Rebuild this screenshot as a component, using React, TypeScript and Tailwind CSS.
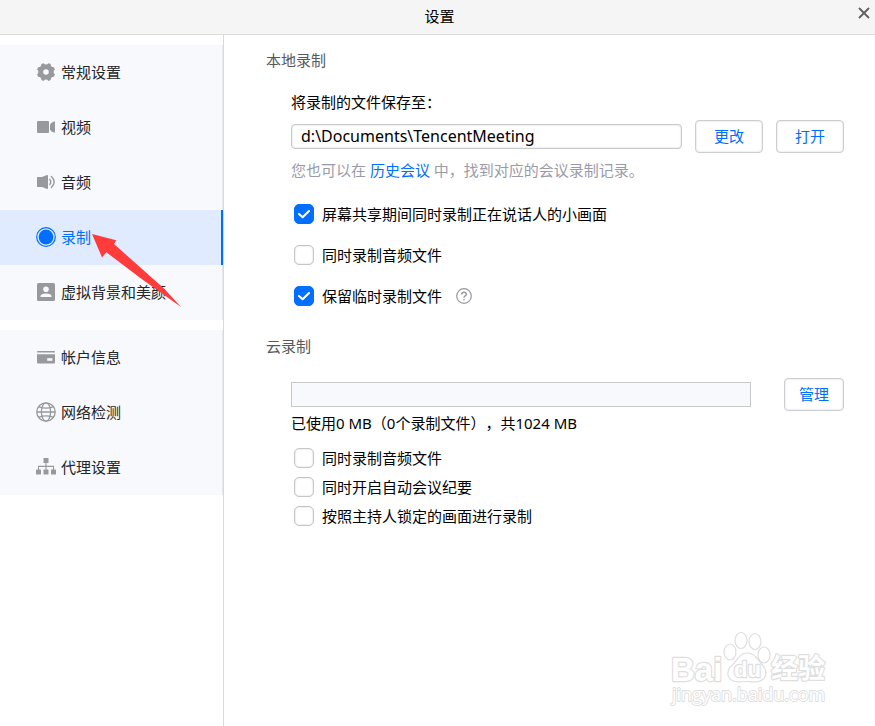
import { useState } from "react";
import type { ReactNode } from "react";

const GearIcon = () => (
  <svg viewBox="0 0 20 20" className="size-5" fill="#97999c" aria-hidden="true">
    <path
      fillRule="evenodd"
      d="M7.6 1.2 Q8.6 2.4 10 2.4 Q11.4 2.4 12.4 1.2 L14.7 2.1 Q14.6 3.7 15.5 4.6 Q16.4 5.4 17.9 5.3 L18.9 7.6 Q17.6 8.6 17.6 10 Q17.6 11.4 18.9 12.4 L17.9 14.7 Q16.3 14.6 15.5 15.5 Q14.6 16.4 14.7 17.9 L12.4 18.9 Q11.4 17.6 10 17.6 Q8.6 17.6 7.6 18.9 L5.3 17.9 Q5.4 16.3 4.5 15.5 Q3.6 14.6 2.1 14.7 L1.1 12.4 Q2.4 11.4 2.4 10 Q2.4 8.6 1.1 7.6 L2.1 5.3 Q3.7 5.4 4.5 4.6 Q5.4 3.6 5.3 2.1 Z M10 7.2 A2.8 2.8 0 1 0 10 12.8 A2.8 2.8 0 1 0 10 7.2 Z"
    />
  </svg>
);

const VideoIcon = () => (
  <svg viewBox="0 0 20 20" className="size-5" fill="#97999c" aria-hidden="true">
    <rect x="1" y="4" width="12" height="12" rx="1" />
    <path d="M14 7.5 Q15 5.2 18 4.4 Q19 4.2 19 5.2 V14.8 Q19 15.8 18 15.6 Q15 14.8 14 12.5 Z" />
  </svg>
);

const AudioIcon = () => (
  <svg viewBox="0 0 20 20" className="size-5" fill="#97999c" aria-hidden="true">
    <path d="M1.6 5 H6 L11 3 Q12 2.8 12 3.8 V16.2 Q12 17.2 11 17 L6 15 H1.6 Q1 15 1 14.4 V5.6 Q1 5 1.6 5 Z" />
    <g fill="none" stroke="#97999c" strokeWidth="1.4" strokeLinecap="round">
      <path d="M13.8 7.4 Q15.8 10 13.8 12.6" />
      <path d="M15.4 4.6 Q21 10 15.4 15.4" />
    </g>
  </svg>
);

const RecordIcon = () => (
  <svg viewBox="0 0 20 20" className="size-5" aria-hidden="true">
    <circle cx="10" cy="10" r="9.3" fill="none" stroke="#006eff" strokeWidth="1.2" />
    <circle cx="10" cy="10" r="7.4" fill="#006eff" />
  </svg>
);

const PortraitIcon = () => (
  <svg viewBox="0 0 20 20" className="size-5" aria-hidden="true">
    <rect x="1" y="1" width="18" height="18" rx="1.5" fill="#97999c" />
    <circle cx="10" cy="7.3" r="2.8" fill="#f7f9fc" />
    <path d="M4.5 15 V14 Q4.8 11.4 10 11.4 Q15.2 11.4 15.5 14 V15 Z" fill="#f7f9fc" />
  </svg>
);

const CardIcon = () => (
  <svg viewBox="0 0 20 20" className="size-5" aria-hidden="true">
    <path d="M1 5.6 V4.6 Q1 4 1.8 4 H18.2 Q19 4 19 4.6 V5.6 Z" fill="#97999c" />
    <path d="M1 7.2 H19 V15.6 Q19 16.4 18.2 16.4 H1.8 Q1 16.4 1 15.6 Z" fill="#97999c" />
    <rect x="11.2" y="11.2" width="5.2" height="2.6" fill="#f7f9fc" />
  </svg>
);

const GlobeIcon = () => (
  <svg viewBox="0 0 20 20" className="size-5" fill="none" stroke="#97999c" strokeWidth="1.3" aria-hidden="true">
    <circle cx="10" cy="10" r="9.2" />
    <ellipse cx="10" cy="10" rx="4.6" ry="9.2" />
    <path d="M0.8 10 H19.2 M2.8 4.8 Q10 7.6 17.2 4.8 M2.8 15.2 Q10 12.4 17.2 15.2" />
  </svg>
);

const TreeIcon = () => (
  <svg viewBox="0 0 20 20" className="size-5" fill="#97999c" aria-hidden="true">
    <rect x="7.5" y="1" width="5" height="5" rx="0.6" />
    <rect x="0" y="12.6" width="5" height="5" rx="0.6" />
    <rect x="7.5" y="12.6" width="5" height="5" rx="0.6" />
    <rect x="15" y="12.6" width="5" height="5" rx="0.6" />
    <path d="M10 6 V13 M2.5 13 V9.4 H17.5 V13" fill="none" stroke="#97999c" strokeWidth="1.1" />
  </svg>
);

type Item = { label: string; icon: ReactNode; pointed?: boolean };

const groups: Item[][] = [
  [
    { label: "常规设置", icon: <GearIcon /> },
    { label: "视频", icon: <VideoIcon /> },
    { label: "音频", icon: <AudioIcon /> },
    { label: "录制", icon: <RecordIcon />, pointed: true },
    { label: "虚拟背景和美颜", icon: <PortraitIcon /> },
  ],
  [
    { label: "帐户信息", icon: <CardIcon /> },
    { label: "网络检测", icon: <GlobeIcon /> },
    { label: "代理设置", icon: <TreeIcon /> },
  ],
];

const PointerArrow = () => (
  <svg viewBox="0 0 90 74" className="pointer-events-none absolute top-[24px] left-[92px] z-10 h-[74px] w-[90px]" aria-hidden="true">
    <path d="M0 0 L24.2 6.3 L22 10 L72 54.6 L89 73 L50 45.2 L14.4 18.3 L10 23.4 Z" fill="#ff3b3b" />
  </svg>
);

function NavItem({ item }: { item: Item }) {
  const active = item.pointed;
  return (
    <li className="relative">
      <button
        type="button"
        aria-current={active ? "page" : undefined}
        className={
          active
            ? "flex h-[55px] w-full items-center gap-[5px] border-r-2 border-[#006eff] bg-[#e0ebff] pb-[2px] pl-9 text-[#006eff]"
            : "flex h-[55px] w-full items-center gap-[5px] border-r border-[#e6e7ea] bg-[#f7f9fc] pb-[2px] pl-9 text-[#25262b]"
        }
      >
        {item.icon}
        <span>{item.label}</span>
      </button>
      {item.pointed && <PointerArrow />}
    </li>
  );
}

function Check({ label, initial = false }: { label: string; initial?: boolean }) {
  const [on, setOn] = useState(initial);
  return (
    <label className="flex w-fit items-center gap-2">
      <span className="grid size-5 shrink-0 place-items-center">
        <input
          type="checkbox"
          checked={on}
          onChange={(e) => setOn(e.target.checked)}
          className="col-start-1 row-start-1 size-5 appearance-none rounded-[5px] border border-[#c6c6c6] bg-white inset-shadow-[0_0_2px_#cccccc] checked:border-[#006eff] checked:bg-[#006eff] checked:inset-shadow-none"
        />
        {on && (
          <svg viewBox="0 0 20 20" className="pointer-events-none col-start-1 row-start-1 size-5" fill="none" aria-hidden="true">
            <path d="M5 10 L8.6 13.2 L15 7" stroke="#ffffff" strokeWidth="2.1" strokeLinecap="round" strokeLinejoin="round" />
          </svg>
        )}
      </span>
      {label}
    </label>
  );
}

function OutlineButton({ children, wide = false }: { children: ReactNode; wide?: boolean }) {
  return (
    <button
      type="button"
      className={
        wide
          ? "h-[33px] w-[68px] shrink-0 rounded-[4px] border border-[#cdced1] bg-white pb-[2px] text-[#006eff] inset-shadow-[0_0_2px_#cccccc]"
          : "h-[33px] w-[60px] shrink-0 rounded-[4px] border border-[#cdced1] bg-white pb-[2px] text-[#006eff] inset-shadow-[0_0_2px_#cccccc]"
      }
    >
      {children}
    </button>
  );
}

function Watermark() {
  return (
    <svg viewBox="0 0 168 84" className="pointer-events-none absolute right-[40px] bottom-[14px] h-[84px] w-[168px]" aria-hidden="true">
      <g fill="#ffffff" stroke="#dedede" strokeWidth="1.2" strokeLinejoin="round">
        <ellipse cx="63" cy="24" rx="6" ry="8" />
        <ellipse cx="74" cy="12.5" rx="6" ry="8" />
        <ellipse cx="88" cy="13.5" rx="6" ry="8" />
        <ellipse cx="97" cy="27" rx="6" ry="8" />
        <path d="M80 25 C88 25 90 31 94.500 36 C100 41 101 50 93 53 C88 55 85 53.500 80 53.500 C75 53.500 70 55 65 52.500 C59 49 60 41 65.500 37 C70 33 72 25 80 25 Z" />
      </g>
      <g fill="#ffffff" stroke="#dedede" strokeWidth="2.400" strokeLinejoin="round" paintOrder="stroke">
        <text x="4" y="53" fontSize="33" className="font-[Liberation_Sans] font-bold">Bai</text>
        <text x="67" y="49" fontSize="22" className="font-[Liberation_Sans] font-bold">du</text>
        <text x="104" y="50" fontSize="27" className="font-[Noto_Sans_CJK_SC] font-bold">经验</text>
        <text x="5" y="73" fontSize="18" strokeWidth="1.800" className="font-[Open_Sans] font-medium">jingyan.baidu.com</text>
      </g>
    </svg>
  );
}

export default function App() {
  return (
    <div className="relative flex min-h-screen flex-col bg-white font-['Noto_Sans','Noto_Sans_CJK_SC',sans-serif] text-[15px] leading-5 text-black [text-spacing-trim:space-all]">
      <header className="relative flex h-[35px] items-center justify-center border-b border-[#dcdcdc] bg-[#f5f5f5] pb-[2px] pl-1">
        <h1>设置</h1>
        <button type="button" aria-label="关闭" className="absolute top-1 right-0 flex h-[18px] w-[22px] items-center justify-center">
          <svg viewBox="0 0 12 12" className="size-3" fill="none" stroke="#5f6062" strokeWidth="1.8" aria-hidden="true">
            <path d="M1 1 L11 11 M11 1 L1 11" />
          </svg>
        </button>
      </header>

      <div className="flex grow">
        <nav className="flex w-[224px] shrink-0 flex-col gap-[10px] border-r border-[#d9dadb] pt-[10px]">
          {groups.map((group, i) => (
            <ul key={i}>
              {group.map((item) => (
                <NavItem key={item.label} item={item} />
              ))}
            </ul>
          ))}
        </nav>

        <main className="min-w-0 grow pt-[15px] pr-[31px] pl-[42px]">
          <section>
            <h2 className="text-[#58595c]">本地录制</h2>
            <div className="pt-[22px] pl-[25px]">
              <label htmlFor="save-path" className="block">将录制的文件保存至：</label>
              <div className="mt-2 flex items-center gap-[13px]">
                <input
                  id="save-path"
                  type="text"
                  defaultValue="d:\Documents\TencentMeeting"
                  className="h-[25px] min-w-0 grow rounded-[4px] border border-[#c8c9cb] bg-white px-[9px] pb-[2px] text-base leading-5 inset-shadow-[0_0_2px_#cccccc]"
                />
                <OutlineButton wide>更改</OutlineButton>
                <OutlineButton wide>打开</OutlineButton>
              </div>
              <p className="mt-[7px] text-[#9a9ba9]">
                您也可以在 <a href="#history" className="text-[#006eff]">历史会议</a> 中，找到对应的会议录制记录。
              </p>
              <div className="mt-6 flex flex-col gap-[21px] pl-[3px]">
                <Check label="屏幕共享期间同时录制正在说话人的小画面" initial />
                <Check label="同时录制音频文件" />
                <div className="flex items-center gap-[14px]">
                  <Check label="保留临时录制文件" initial />
                  <button type="button" aria-label="帮助">
                    <svg viewBox="0 0 16 16" className="size-4" fill="none" stroke="#97999c" strokeWidth="1.2" aria-hidden="true">
                      <circle cx="8" cy="8" r="7.300" />
                      <path d="M5.700 6.500 Q5.700 4.300 8 4.300 Q10.300 4.300 10.300 6.200 Q10.300 7.200 9.200 7.900 Q8 8.700 8 9.700" strokeWidth="1.4" />
                      <path d="M8 10.900 V12.300" strokeWidth="1.5" />
                    </svg>
                  </button>
                </div>
              </div>
            </div>
          </section>

          <section className="mt-[30px]">
            <h2 className="text-[#58595c]">云录制</h2>
            <div className="pt-[22px] pl-[25px]">
              <div className="flex items-center gap-[33px]">
                <div
                  role="progressbar"
                  aria-label="云录制空间"
                  aria-valuemin={0}
                  aria-valuemax={1024}
                  aria-valuenow={0}
                  className="h-[25px] grow border border-[#c8c9cb] bg-[#f7f9fc]"
                />
                <OutlineButton>管理</OutlineButton>
              </div>
              <p className="mt-[2px]">已使用0 MB（0个录制文件），共1024 MB</p>
              <div className="mt-[15px] flex flex-col gap-[9px] pl-[3px]">
                <Check label="同时录制音频文件" />
                <Check label="同时开启自动会议纪要" />
                <Check label="按照主持人锁定的画面进行录制" />
              </div>
            </div>
          </section>
        </main>
      </div>
      <Watermark />
    </div>
  );
}
